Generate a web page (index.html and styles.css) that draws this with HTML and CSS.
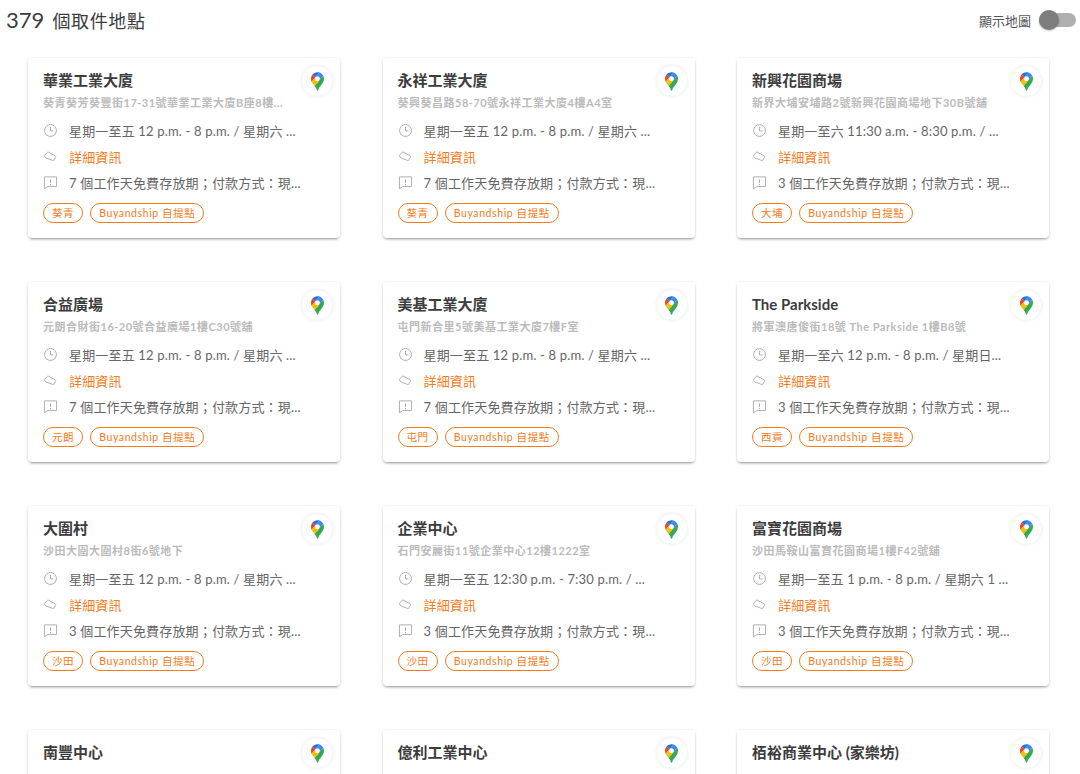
FILE: index.html
```html
<!DOCTYPE html>
<html lang="zh-Hant">
<head>
    <meta charset="UTF-8">
    <meta name="viewport" content="width=device-width, initial-scale=1.0">
    <title>取件地點</title>
    <link rel="stylesheet" href="styles.css">
</head>
<body>
    <!-- 共用圖示 -->
    <svg class="icon-defs" xmlns="http://www.w3.org/2000/svg">
        <symbol id="icon-maps" viewBox="0 0 92.3 132.3">
            <path fill="#1a73e8" d="M60.2 2.2C55.8.8 51 0 46.1 0 32 0 19.3 6.4 10.8 16.5l21.8 18.3L60.2 2.2z"/>
            <path fill="#ea4335" d="M10.8 16.5C4.1 24.5 0 34.9 0 46.1c0 8.7 1.7 15.7 4.6 22l28-33.3-21.8-18.3z"/>
            <path fill="#4285f4" d="M46.2 28.5c9.8 0 17.7 7.9 17.7 17.7 0 4.3-1.6 8.3-4.2 11.4 0 0 13.9-16.6 27.5-32.7-5.6-10.8-15.3-19-27-22.7L32.6 34.8c3.3-3.8 8.1-6.3 13.6-6.3"/>
            <path fill="#fbbc04" d="M46.2 63.8c-9.8 0-17.7-7.9-17.7-17.7 0-4.3 1.5-8.3 4.1-11.3l-28 33.3c4.8 10.6 12.8 19.2 21 29.9l34.1-40.5c-3.3 3.9-8.1 6.3-13.5 6.3"/>
            <path fill="#34a853" d="M59.1 109.2c15.4-24.1 33.3-35 33.3-63 0-7.7-1.9-14.9-5.2-21.3L25.6 98c2.6 3.4 5.3 7.3 7.9 11.3 9.4 14.5 6.8 23.1 12.8 23.1s3.4-8.7 12.8-23.2"/>
        </symbol>
        <symbol id="icon-clock" viewBox="0 0 16 16">
            <circle cx="8" cy="8" r="6.3" fill="none" stroke="currentColor"/>
            <path d="M8 4v4.4h3.2" fill="none" stroke="currentColor"/>
        </symbol>
        <symbol id="icon-tag" viewBox="0 0 16 16">
            <path d="M1.400 6.900 4.600 3.600c.3-.3.7-.4 1.100-.2l7.200 3.800c.6.300.8 1 .5 1.500l-1.800 3.100c-.3.500-.9.700-1.400.4L3 9.400c-.3-.2-.5-.4-.7-.6z" fill="none" stroke="currentColor"/>
        </symbol>
        <symbol id="icon-note" viewBox="0 0 16 16">
            <path d="M1.500 2h13v10.300H5l-3.500 2.500z" fill="none" stroke="currentColor"/>
            <path d="M8 4.500v4M8 9.500v1.200" fill="none" stroke="currentColor"/>
        </symbol>
    </svg>

    <header class="top-bar">
        <h1 class="page-title"><span class="count">379</span> 個取件地點</h1>
        <div class="map-toggle">
            <span>顯示地圖</span>
            <span class="switch"><span class="knob"></span></span>
        </div>
    </header>

    <main class="card-grid">
        <article class="card">
            <h2>華業工業大廈</h2>
            <a class="maps-btn" href="#"><svg><use href="#icon-maps"/></svg></a>
            <p class="address">葵青葵芳葵豐街17-31號華業工業大廈B座8樓...</p>
            <ul class="info">
                <li><svg><use href="#icon-clock"/></svg>星期一至五 12 p.m. - 8 p.m. / 星期六 ...</li>
                <li class="details"><svg><use href="#icon-tag"/></svg>詳細資訊</li>
                <li><svg><use href="#icon-note"/></svg>7 個工作天免費存放期；付款方式：現...</li>
            </ul>
            <div class="tags"><span>葵青</span><span>Buyandship 自提點</span></div>
        </article>

        <article class="card">
            <h2>永祥工業大廈</h2>
            <a class="maps-btn" href="#"><svg><use href="#icon-maps"/></svg></a>
            <p class="address">葵興葵昌路58-70號永祥工業大廈4樓A4室</p>
            <ul class="info">
                <li><svg><use href="#icon-clock"/></svg>星期一至五 12 p.m. - 8 p.m. / 星期六 ...</li>
                <li class="details"><svg><use href="#icon-tag"/></svg>詳細資訊</li>
                <li><svg><use href="#icon-note"/></svg>7 個工作天免費存放期；付款方式：現...</li>
            </ul>
            <div class="tags"><span>葵青</span><span>Buyandship 自提點</span></div>
        </article>

        <article class="card">
            <h2>新興花園商場</h2>
            <a class="maps-btn" href="#"><svg><use href="#icon-maps"/></svg></a>
            <p class="address">新界大埔安埔路2號新興花園商場地下30B號舖</p>
            <ul class="info">
                <li><svg><use href="#icon-clock"/></svg>星期一至六 11:30 a.m. - 8:30 p.m. / ...</li>
                <li class="details"><svg><use href="#icon-tag"/></svg>詳細資訊</li>
                <li><svg><use href="#icon-note"/></svg>3 個工作天免費存放期；付款方式：現...</li>
            </ul>
            <div class="tags"><span>大埔</span><span>Buyandship 自提點</span></div>
        </article>

        <article class="card">
            <h2>合益廣場</h2>
            <a class="maps-btn" href="#"><svg><use href="#icon-maps"/></svg></a>
            <p class="address">元朗合財街16-20號合益廣場1樓C30號舖</p>
            <ul class="info">
                <li><svg><use href="#icon-clock"/></svg>星期一至五 12 p.m. - 8 p.m. / 星期六 ...</li>
                <li class="details"><svg><use href="#icon-tag"/></svg>詳細資訊</li>
                <li><svg><use href="#icon-note"/></svg>7 個工作天免費存放期；付款方式：現...</li>
            </ul>
            <div class="tags"><span>元朗</span><span>Buyandship 自提點</span></div>
        </article>

        <article class="card">
            <h2>美基工業大廈</h2>
            <a class="maps-btn" href="#"><svg><use href="#icon-maps"/></svg></a>
            <p class="address">屯門新合里5號美基工業大廈7樓F室</p>
            <ul class="info">
                <li><svg><use href="#icon-clock"/></svg>星期一至五 12 p.m. - 8 p.m. / 星期六 ...</li>
                <li class="details"><svg><use href="#icon-tag"/></svg>詳細資訊</li>
                <li><svg><use href="#icon-note"/></svg>7 個工作天免費存放期；付款方式：現...</li>
            </ul>
            <div class="tags"><span>屯門</span><span>Buyandship 自提點</span></div>
        </article>

        <article class="card">
            <h2>The Parkside</h2>
            <a class="maps-btn" href="#"><svg><use href="#icon-maps"/></svg></a>
            <p class="address">將軍澳唐俊街18號 The Parkside 1樓B8號</p>
            <ul class="info">
                <li><svg><use href="#icon-clock"/></svg>星期一至六 12 p.m. - 8 p.m. / 星期日...</li>
                <li class="details"><svg><use href="#icon-tag"/></svg>詳細資訊</li>
                <li><svg><use href="#icon-note"/></svg>3 個工作天免費存放期；付款方式：現...</li>
            </ul>
            <div class="tags"><span>西貢</span><span>Buyandship 自提點</span></div>
        </article>

        <article class="card">
            <h2>大圍村</h2>
            <a class="maps-btn" href="#"><svg><use href="#icon-maps"/></svg></a>
            <p class="address">沙田大圍大圍村8街6號地下</p>
            <ul class="info">
                <li><svg><use href="#icon-clock"/></svg>星期一至五 12 p.m. - 8 p.m. / 星期六 ...</li>
                <li class="details"><svg><use href="#icon-tag"/></svg>詳細資訊</li>
                <li><svg><use href="#icon-note"/></svg>3 個工作天免費存放期；付款方式：現...</li>
            </ul>
            <div class="tags"><span>沙田</span><span>Buyandship 自提點</span></div>
        </article>

        <article class="card">
            <h2>企業中心</h2>
            <a class="maps-btn" href="#"><svg><use href="#icon-maps"/></svg></a>
            <p class="address">石門安麗街11號企業中心12樓1222室</p>
            <ul class="info">
                <li><svg><use href="#icon-clock"/></svg>星期一至五 12:30 p.m. - 7:30 p.m. / ...</li>
                <li class="details"><svg><use href="#icon-tag"/></svg>詳細資訊</li>
                <li><svg><use href="#icon-note"/></svg>3 個工作天免費存放期；付款方式：現...</li>
            </ul>
            <div class="tags"><span>沙田</span><span>Buyandship 自提點</span></div>
        </article>

        <article class="card">
            <h2>富寶花園商場</h2>
            <a class="maps-btn" href="#"><svg><use href="#icon-maps"/></svg></a>
            <p class="address">沙田馬鞍山富寶花園商場1樓F42號舖</p>
            <ul class="info">
                <li><svg><use href="#icon-clock"/></svg>星期一至五 1 p.m. - 8 p.m. / 星期六 1 ...</li>
                <li class="details"><svg><use href="#icon-tag"/></svg>詳細資訊</li>
                <li><svg><use href="#icon-note"/></svg>3 個工作天免費存放期；付款方式：現...</li>
            </ul>
            <div class="tags"><span>沙田</span><span>Buyandship 自提點</span></div>
        </article>

        <article class="card">
            <h2>南豐中心</h2>
            <a class="maps-btn" href="#"><svg><use href="#icon-maps"/></svg></a>
        </article>

        <article class="card">
            <h2>億利工業中心</h2>
            <a class="maps-btn" href="#"><svg><use href="#icon-maps"/></svg></a>
        </article>

        <article class="card">
            <h2>栢裕商業中心 (家樂坊)</h2>
            <a class="maps-btn" href="#"><svg><use href="#icon-maps"/></svg></a>
        </article>
    </main>
</body>
</html>
```

FILE: styles.css
```css
html, body {
    height: 100%;
    overflow: hidden;
}

body {
    margin: 0;
    background: #fff;
    color: #333;
    font-family: Lato, 'Noto Sans CJK TC', sans-serif;
}

.icon-defs {
    display: none;
}

.top-bar {
    display: flex;
    justify-content: space-between;
    align-items: center;
    height: 42px;
    padding: 0 4px 0 6px;
}

.page-title {
    margin: 0;
    padding-bottom: 4px;
    font-size: 18px;
    font-weight: 400;
    letter-spacing: 0.6px;
    color: #3c3c3c;
}

.count {
    margin-right: 3px;
    font-size: 22px;
    letter-spacing: 0;
}

.map-toggle {
    display: flex;
    align-items: center;
    gap: 8px;
    padding-bottom: 2px;
    font-size: 13px;
    color: #555;
}

.switch {
    display: block;
    width: 37px;
    height: 14px;
    border-radius: 7px;
    background: #b0b0b0;
}

.knob {
    display: block;
    width: 20px;
    height: 20px;
    margin: -3px 0 0 0;
    border-radius: 50%;
    background: #7d7d7d;
    box-shadow: 0 1px 2px rgba(0, 0, 0, 0.25);
}

.card-grid {
    display: grid;
    grid-template-columns: repeat(3, 312px);
    column-gap: 42.5px;
    row-gap: 44px;
    padding: 16px 0 0 28px;
}

.card {
    position: relative;
    height: 180px;
    box-sizing: border-box;
    padding: 12px 15px 0;
    background: #fff;
    border-radius: 4px;
    box-shadow: 0 2px 3px -1px rgba(0, 0, 0, 0.4), 0 0 3px rgba(0, 0, 0, 0.1);
}

.card h2 {
    margin: 0;
    font-size: 15px;
    line-height: 20px;
    font-weight: 700;
    color: #3c3c3c;
}

.maps-btn {
    position: absolute;
    top: 8px;
    right: 8px;
    display: flex;
    align-items: center;
    justify-content: center;
    width: 30px;
    height: 30px;
    border-radius: 50%;
    background: #fff;
    box-shadow: 0 0 4px rgba(0, 0, 0, 0.1);
}

.maps-btn svg {
    width: 13px;
    height: 19px;
}

.address {
    margin: 5px 0 0;
    font-size: 11px;
    line-height: 16px;
    font-weight: 700;
    letter-spacing: 0.5px;
    color: #bbb;
    white-space: nowrap;
}

.info {
    margin: 6px 0 0;
    padding: 0;
    list-style: none;
}

.info li {
    display: flex;
    align-items: center;
    height: 26px;
    font-size: 13px;
    letter-spacing: 0.17px;
    color: #666;
    white-space: nowrap;
}

.info svg {
    flex: none;
    width: 15px;
    height: 15px;
    margin-right: 11px;
    color: #aaa;
}

.info .details {
    color: #f47b20;
}

.tags {
    display: flex;
    gap: 7px;
    margin-top: 8px;
}

.tags span {
    height: 18px;
    padding: 0 8px;
    border: 1px solid #f47b20;
    border-radius: 10px;
    font-size: 10.5px;
    line-height: 18px;
    letter-spacing: 0.6px;
    color: #f47b20;
}
```
